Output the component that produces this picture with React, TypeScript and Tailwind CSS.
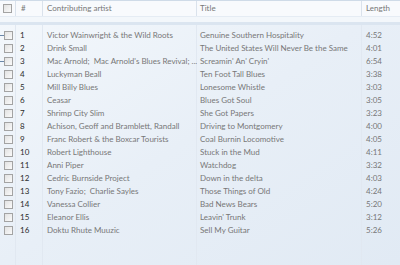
import React from 'react'

const tracks: [string, string, string][] = [
  ['Victor Wainwright & the Wild Roots', 'Genuine Southern Hospitality', '4:52'],
  ['Drink Small', 'The United States Will Never Be the Same', '4:01'],
  ["Mac Arnold;  Mac Arnold's Blues Revival; ...", "Screamin' An' Cryin'", '6:54'],
  ['Luckyman Beall', 'Ten Foot Tall Blues', '3:38'],
  ['Mill Billy Blues', 'Lonesome Whistle', '3:03'],
  ['Ceasar', 'Blues Got Soul', '3:05'],
  ['Shrimp City Slim', 'She Got Papers', '3:23'],
  ['Achison, Geoff and Bramblett, Randall', 'Driving to Montgomery', '4:00'],
  ['Franc Robert & the Boxcar Tourists', 'Coal Burnin Locomotive', '4:05'],
  ['Robert Lighthouse', 'Stuck in the Mud', '4:11'],
  ['Anni Piper', 'Watchdog', '3:32'],
  ['Cedric Burnside Project', 'Down in the delta', '4:03'],
  ['Tony Fazio;  Charlie Sayles', 'Those Things of Old', '4:24'],
  ['Vanessa Collier', 'Bad News Bears', '5:20'],
  ['Eleanor Ellis', "Leavin' Trunk", '3:12'],
  ['Doktu Rhute Muuzic', 'Sell My Guitar', '5:26'],
]

function Box() {
  return (
    <span className="block w-[9px] h-[9px] border border-[#a3a3a3] bg-gradient-to-br from-[#e2e2e2] to-[#fafafa]" />
  )
}

const cols = 'grid grid-cols-[16px_27px_154px_165px_1fr]'

export default function App() {
  return (
    <div
      className="relative w-[400px] h-[265px] overflow-hidden bg-gradient-to-br from-[#f4f8fc] via-[#e8eff7] to-[#e1eaf4] text-[8px] leading-[13px] text-[#777777]"
      style={{ fontFamily: 'Lato, "Open Sans", sans-serif' }}
    >
      {/* column lines */}
      <div className={`${cols} absolute inset-0 pointer-events-none`}>
        <div className="border-r border-[#e1e8f1]" />
        <div className="border-r border-[#e1e8f1]" />
        <div className="border-r border-[#e1e8f1]" />
        <div className="border-r border-[#e1e8f1]" />
        <div />
      </div>

      <div className="relative">
        {/* header */}
        <div className={`${cols} h-[17px] items-center bg-[#f8fafd] border-t border-[#cfdbe8] border-b border-b-[#e5ecf4]`}>
          <div className="flex justify-center h-full items-center border-r border-[#dae2ec]"><Box /></div>
          <div className="pl-[5px] h-full flex items-center border-r border-[#dae2ec]">#</div>
          <div className="pl-[4px] h-full flex items-center border-r border-[#dae2ec]">Contributing artist</div>
          <div className="pl-[3px] h-full flex items-center border-r border-[#dae2ec]">Title</div>
          <div className="pl-[4px] h-full flex items-center">Length</div>
        </div>
        <div className="h-[5px] bg-[#f3f7fb]" />
        <div className="h-[3px] bg-[#dbe5f0]" />
        <div className="h-[4px]" />

        {/* rows */}
        {tracks.map(([artist, title, len], i) => (
          <div key={i} className={`${cols} h-[13px] items-center relative`}>
            {(i === 0 || i === 2) && (
              <span className="absolute left-0 top-[6px] w-[4px] h-px bg-[#6b87a8]" />
            )}
            <div className="flex justify-center"><Box /></div>
            <div className="pl-[4px] text-[#2b2b2b]">{i + 1}</div>
            <div className="pl-[4px] whitespace-pre overflow-hidden">{artist}</div>
            <div className="pl-[3px] whitespace-pre overflow-hidden">{title}</div>
            <div className="pl-[4px]">{len}</div>
          </div>
        ))}
      </div>
    </div>
  )
}
